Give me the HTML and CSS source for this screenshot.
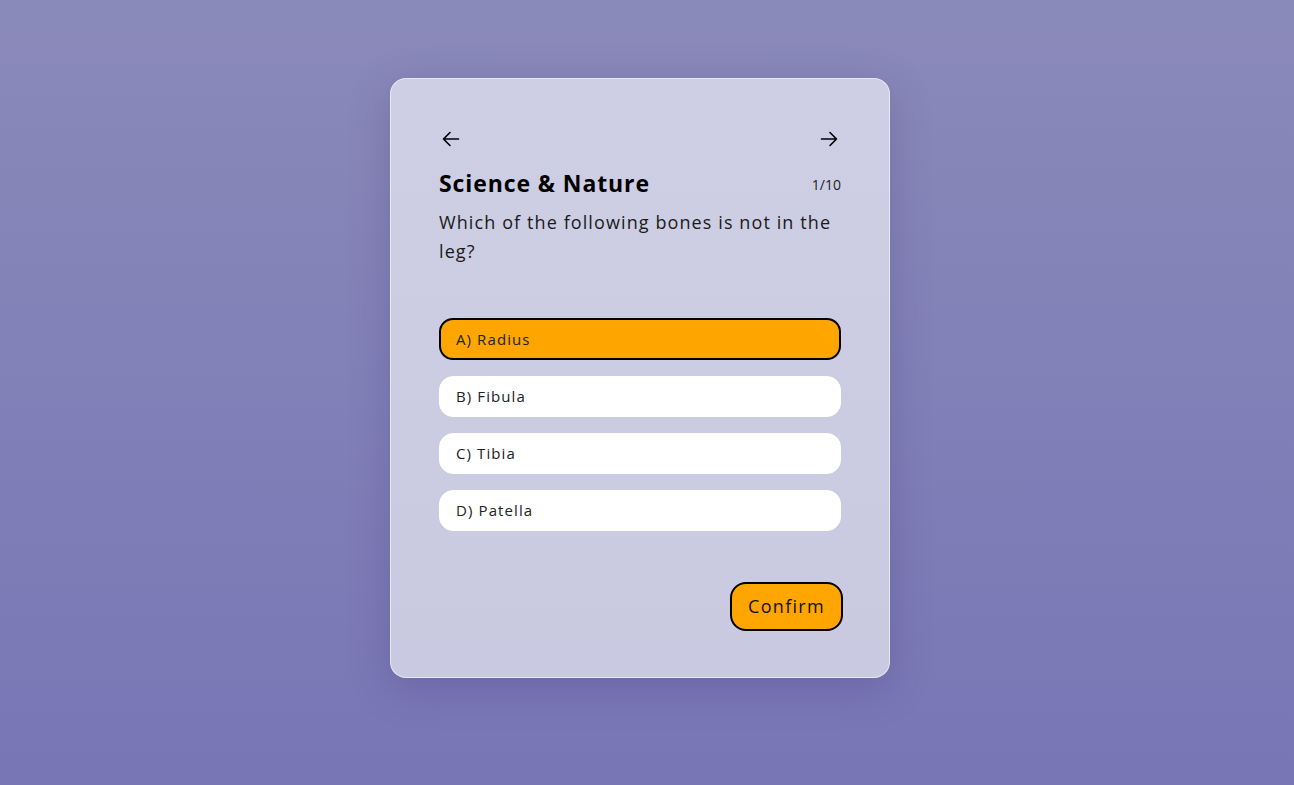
FILE: index.html
```html
<!DOCTYPE html>
<html lang="en">
  <head>
    <meta charset="utf-8" />
    <meta name="viewport" content="width=device-width, initial-scale=1.0" />
    <title>Quiz</title>
    <link rel="stylesheet" href="styles.css">
  </head>
  <body>
    <main class="card">
      <div class="nav">
        <span class="arrow">
          <svg width="24" height="24" viewBox="0 0 24 24" fill="none" stroke="#000" stroke-width="1.6" stroke-linecap="round" stroke-linejoin="round"><path d="M19.5 12H4.5M11 5.5L4.5 12L11 18.5"/></svg>
        </span>
        <span class="arrow">
          <svg width="24" height="24" viewBox="0 0 24 24" fill="none" stroke="#000" stroke-width="1.6" stroke-linecap="round" stroke-linejoin="round"><path d="M4.5 12H19.5M13 5.5L19.5 12L13 18.5"/></svg>
        </span>
      </div>

      <div class="head">
        <h1 class="category">Science &amp; Nature</h1>
        <span class="count">1/10</span>
      </div>
      <p class="question">Which of the following bones is not in the leg?</p>

      <ul class="answers">
        <li class="answer selected">A) Radius</li>
        <li class="answer">B) Fibula</li>
        <li class="answer">C) Tibia</li>
        <li class="answer">D) Patella</li>
      </ul>

      <div class="actions">
        <button class="confirm">Confirm</button>
      </div>
    </main>
  </body>
</html>
```

FILE: styles.css
```css
html, body {
    height: 100%;
}

body {
    margin: 0;
    font-family: "Open Sans", "Liberation Sans", sans-serif;
    color: #111;
    background: linear-gradient(180deg, #8a8aba 0%, #7876b5 100%);
    display: flex;
    justify-content: center;
    padding: 78px 14px 0 0;
    box-sizing: border-box;
}

.card {
    width: 500px;
    height: 600px;
    box-sizing: border-box;
    padding: 48px;
    background: linear-gradient(180deg, #cecfe4 0%, #c9c9e1 100%);
    border: 1px solid rgba(255, 255, 255, 0.55);
    border-radius: 16px;
    box-shadow: 0 10px 40px rgba(60, 55, 120, 0.28);
    display: flex;
    flex-direction: column;
}

.nav {
    display: flex;
    justify-content: space-between;
    height: 24px;
}

.arrow {
    display: inline-block;
    width: 24px;
    height: 24px;
}

.head {
    display: flex;
    justify-content: space-between;
    align-items: center;
    margin-top: 16px;
}

.category {
    margin: 0;
    font-size: 23px;
    line-height: 32px;
    font-weight: 700;
    letter-spacing: 0.9px;
    color: #000;
}

.count {
    font-size: 14px;
    color: #222;
    margin-top: 2px;
}

.question {
    margin: 9px 0 0;
    font-size: 18px;
    line-height: 29px;
    letter-spacing: 1.1px;
    color: #1a1a1a;
}

.answers {
    list-style: none;
    margin: 52px 0 0;
    padding: 0;
    display: flex;
    flex-direction: column;
    gap: 16px;
}

.answer {
    background: #fff;
    border: 1px solid #fff;
    border-radius: 14px;
    padding: 8px 16px;
    font-size: 15px;
    line-height: 23px;
    letter-spacing: 1.1px;
    color: #222;
}

.answer.selected {
    background: #ffa500;
    border: 2px solid #000;
    padding: 7.5px 15px;
}

.actions {
    margin: auto -2px -2px 0;
    display: flex;
    justify-content: flex-end;
}

.confirm {
    font-family: inherit;
    font-size: 18px;
    line-height: 29px;
    letter-spacing: 1.3px;
    padding: 8px 16px;
    background: #ffa500;
    border: 2px solid #000;
    border-radius: 16px;
    color: #111;
}
```
